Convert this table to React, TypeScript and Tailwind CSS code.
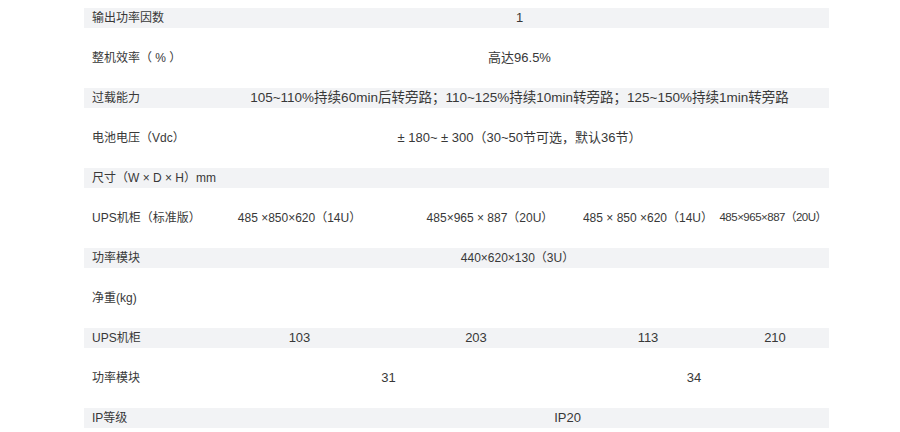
const font = { fontFamily: '"Liberation Sans", "Noto Sans CJK SC", sans-serif' };

const Label = ({ children }: { children: React.ReactNode }) => (
  <div className="w-[130px] shrink-0 pl-2 text-[12px] whitespace-nowrap">{children}</div>
);

const SpecRow = ({ shaded, children }: { shaded?: boolean; children: React.ReactNode }) => (
  <div className={`flex items-center ${shaded ? "h-[20px] bg-[#f2f3f5]" : "h-[60px]"}`}>{children}</div>
);

export default function App() {
  return (
    <div className="w-[900px] h-[432px] bg-white pt-2 pl-[84px] text-[#383838]" style={font}>
      <div className="w-[745px] flex flex-col">
        <SpecRow shaded>
          <Label>输出功率因数</Label>
          <div className="flex-1 text-center text-[13px] pr-1">1</div>
        </SpecRow>
        <SpecRow>
          <Label>整机效率（ % ）</Label>
          <div className="flex-1 text-center text-[13px] pr-1">高达96.5%</div>
        </SpecRow>
        <SpecRow shaded>
          <Label>过载能力</Label>
          <div className="flex-1 text-center text-[13.5px] pr-1 whitespace-nowrap">
            105~110%持续60min后转旁路；110~125%持续10min转旁路；125~150%持续1min转旁路
          </div>
        </SpecRow>
        <SpecRow>
          <Label>电池电压（Vdc）</Label>
          <div className="flex-1 text-center text-[13px] pr-1">± 180~ ± 300（30~50节可选，默认36节）</div>
        </SpecRow>
        <SpecRow shaded>
          <Label>尺寸（W × D × H）mm</Label>
        </SpecRow>
        <SpecRow>
          <Label>UPS机柜（标准版）</Label>
          <div className="w-[167px] text-center text-[12px] whitespace-nowrap pl-1">485 ×850×620（14U）</div>
          <div className="w-[198px] text-center text-[12px] whitespace-nowrap pl-5">485×965 × 887（20U）</div>
          <div className="w-[138px] text-center text-[12px] whitespace-nowrap">485 × 850 ×620（14U）</div>
          <div className="w-[112px] text-center text-[11.5px] tracking-[-0.5px] whitespace-nowrap">485×965×887（20U）</div>
        </SpecRow>
        <SpecRow shaded>
          <Label>功率模块</Label>
          <div className="flex-1 text-center text-[12px] pr-2 whitespace-nowrap">440×620×130（3U）</div>
        </SpecRow>
        <SpecRow>
          <Label>净重(kg)</Label>
        </SpecRow>
        <SpecRow shaded>
          <Label>UPS机柜</Label>
          <div className="w-[167px] text-center text-[13px] pl-1">103</div>
          <div className="w-[198px] text-center text-[13px] pr-2">203</div>
          <div className="w-[138px] text-center text-[13px]">113</div>
          <div className="w-[112px] text-center text-[13px] pl-1">210</div>
        </SpecRow>
        <SpecRow>
          <Label>功率模块</Label>
          <div className="w-[365px] text-center text-[13px] pr-4">31</div>
          <div className="w-[250px] text-center text-[13px] pr-5">34</div>
        </SpecRow>
        <SpecRow shaded>
          <Label>IP等级</Label>
          <div className="flex-1 text-center text-[13px] pl-[92px]">IP20</div>
        </SpecRow>
      </div>
    </div>
  );
}
